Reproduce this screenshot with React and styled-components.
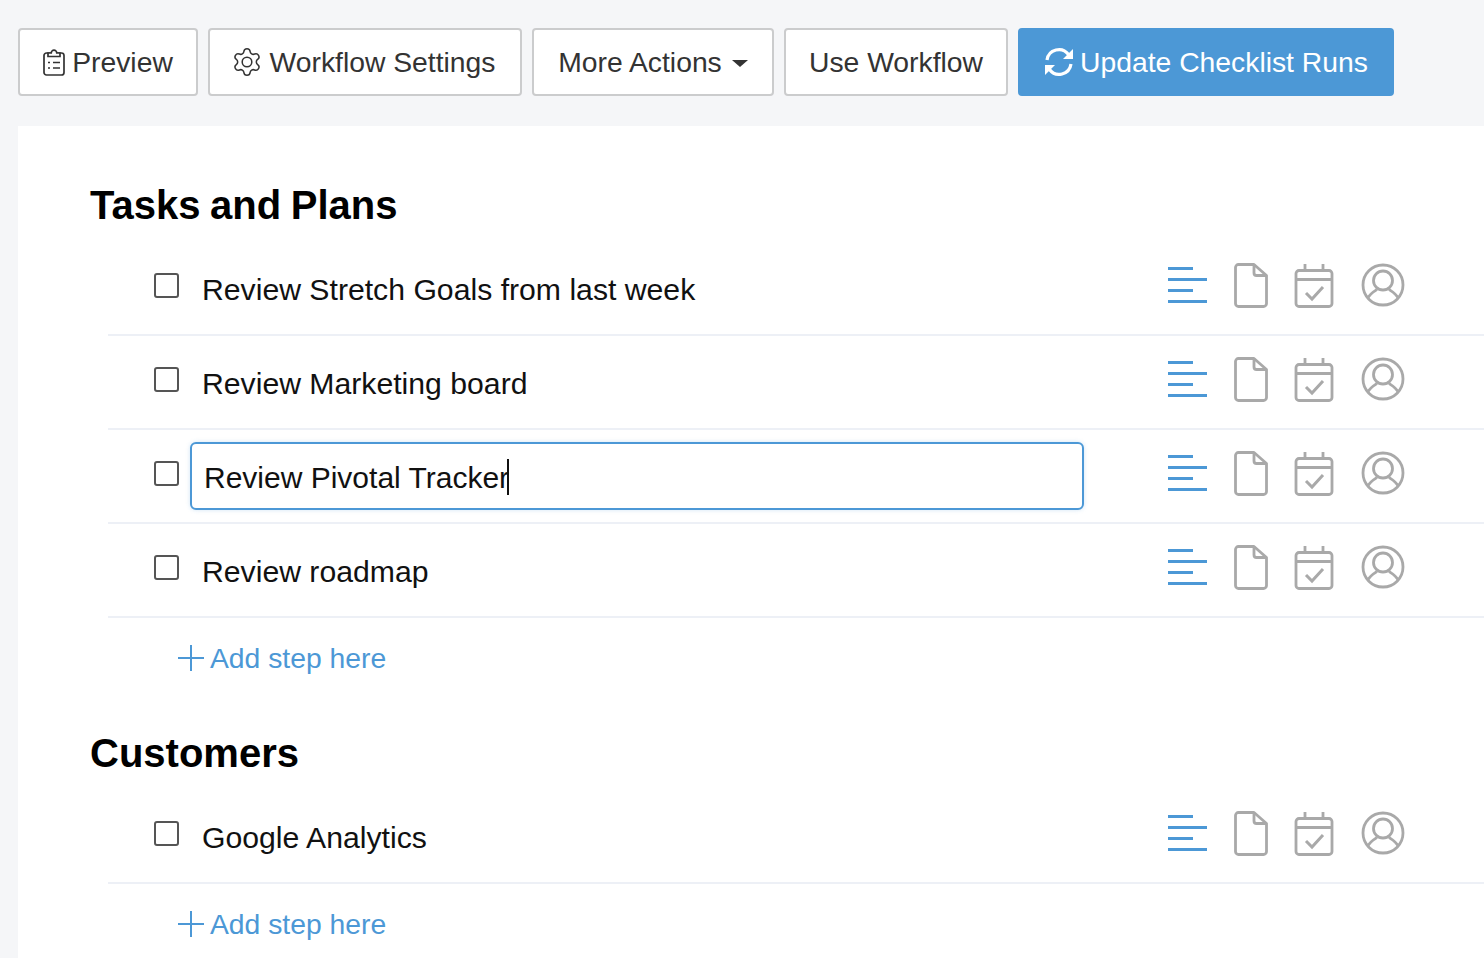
import React from "react";
import styled, { createGlobalStyle } from "styled-components";

const Global = createGlobalStyle`
  html, body { margin: 0; padding: 0; background: #f5f6f8; overflow: hidden; }
  body { font-family: "Liberation Sans", Arial, sans-serif; }
`;
const Page = styled.div`
  width: 1484px; height: 958px; overflow: hidden; background: #f5f6f8;
`;
const Toolbar = styled.div`
  display: flex; gap: 10px; padding: 28px 0 30px 18px; height: 68px;
`;
const Button = styled.button`
  display: flex; align-items: center; justify-content: center; gap: ${p => p.$gap || 0}px;
  width: ${p => p.$w}px; height: 68px; box-sizing: border-box; padding: 0 ${p => p.$pr || 0}px 0 0;
  background: ${p => (p.$primary ? "#4c98d6" : "#fff")};
  color: ${p => (p.$primary ? "#fff" : "#333")};
  border: 2px solid ${p => (p.$primary ? "#4c98d6" : "#cbcccd")};
  border-radius: 4px; font: 400 28.3px "Liberation Sans", Arial, sans-serif;
`;
const Caret = styled.span`
  width: 0; height: 0; margin-left: 10px; margin-top: 3px;
  border-left: 8px solid transparent; border-right: 8px solid transparent; border-top: 7px solid #333;
`;
const Panel = styled.main`
  margin-left: 18px; background: #fff; height: 832px; padding-left: 72px; padding-top: 54px; box-sizing: border-box;
`;
const Section = styled.section`
  margin-bottom: ${p => p.$mb || 0}px;
`;
const Heading = styled.h2`
  margin: 0; font: 700 40px/50px "Liberation Sans", Arial, sans-serif; color: #000; height: 62px; word-spacing: -1.500px;
`;
const Row = styled.div`
  display: flex; align-items: flex-start; height: 94px; box-sizing: border-box;
  margin-left: 18px; border-bottom: 2px solid #edf0f6; position: relative;
`;
const Check = styled.span`
  width: 25px; height: 25px; box-sizing: border-box; flex: none; margin: 31px 0 0 46px;
  border: 2px solid #555; border-radius: 3px; background: #fff;
`;
const Label = styled.div`
  width: 894px; flex: none; margin: 29px 0 0 23px; font-size: 30.200px; line-height: 38px; color: #111; white-space: nowrap;
`;
const Editor = styled.div`
  width: 894px; height: 68px; flex: none; box-sizing: border-box; margin: 12px 0 0 11px; padding: 15px 0 0 12px;
  border: 2px solid #4c98d6; border-radius: 6px; font-size: 30px; line-height: 38px; color: #111; white-space: nowrap;
  box-shadow: 0 0 4px rgba(76,152,214,.25); background: #fff;
  display: flex;
`;
const Caretbar = styled.span`
  width: 2px; height: 36px; background: #111; margin: 0 0 0 -2px;
`;
const Icons = styled.div`
  position: absolute; left: 1059px; top: 22px; display: flex; align-items: flex-start;
`;
const Add = styled.div`
  display: flex; align-items: center; gap: 6px; height: 82px; margin-left: 88px; padding-bottom: 2px; box-sizing: border-box;
  color: #4c98d6; font-size: 28.300px;
`;

const LinesIcon = () => (
  <svg width="40" height="40" viewBox="0 0 40 40" fill="none" stroke="#4c98d6" strokeWidth="3">
    <path d="M1 4.500H26M1 15.500H40M1 26.500H26M1 37.500H40" />
  </svg>
);
const DocIcon = () => (
  <svg width="34" height="46" viewBox="0 0 34 46" fill="none" stroke="#a9a9a9" strokeWidth="2.800" strokeLinejoin="round" style={{ marginLeft: 27, marginTop: -1 }}>
    <path d="M4.500 1.500H20L32.500 12.500V40.500a3 3 0 0 1-3 3H4.500a3 3 0 0 1-3-3V4.500a3 3 0 0 1 3-3Z" />
    <path d="M20 1.500V10a2.500 2.500 0 0 0 2.500 2.500H32.500" />
  </svg>
);
const CalIcon = () => (
  <svg width="40" height="46" viewBox="0 0 40 46" fill="none" stroke="#a9a9a9" strokeWidth="2.800" style={{ marginLeft: 26, marginTop: -1 }}>
    <rect x="2" y="7.500" width="36" height="36" rx="3" />
    <path d="M2 16.500H38M11 1V7.500M29 1V7.500" />
    <path d="M12 30L18 36L29 24" strokeWidth="3" />
  </svg>
);
const UserIcon = () => (
  <svg width="44" height="44" viewBox="0 0 44 44" fill="none" stroke="#a9a9a9" strokeWidth="2.800" style={{ marginLeft: 27, marginTop: -1 }}>
    <circle cx="22" cy="22" r="20" />
    <circle cx="22" cy="17.500" r="9.500" />
    <path d="M6.500 35.500C9 30.500 13 28.500 16 26.500M37.500 35.500C35 30.500 31 28.500 28 26.500" />
  </svg>
);
const ClipboardIcon = () => (
  <svg width="22" height="28" viewBox="0 0 22 28" fill="none" stroke="#333" strokeWidth="1.700" style={{ marginTop: 0 }}>
    <rect x="1" y="5" width="20" height="22" rx="2.500" />
    <path d="M5 5V8.500H17V5H13.800a2.800 2.800 0 0 0-5.600 0Z" fill="#fff" />
    <path d="M5 14.500h2M10 14.500h7M5 20h2M10 20h7" />
  </svg>
);
const GearIcon = () => (
  <svg width="32" height="32" viewBox="0 0 24 24" fill="none" stroke="#333" strokeWidth="1.150" strokeLinejoin="round">
    <path d="M9.671 4.136a2.340 2.340 0 0 1 4.659 0 2.340 2.340 0 0 0 3.319 1.915 2.340 2.340 0 0 1 2.330 4.033 2.340 2.340 0 0 0 0 3.831 2.340 2.340 0 0 1-2.330 4.033 2.340 2.340 0 0 0-3.319 1.915 2.340 2.340 0 0 1-4.659 0 2.340 2.340 0 0 0-3.320-1.915 2.340 2.340 0 0 1-2.330-4.033 2.340 2.340 0 0 0 0-3.831A2.340 2.340 0 0 1 6.350 6.051a2.340 2.340 0 0 0 3.319-1.915" />
    <circle cx="12" cy="12" r="3.600" />
  </svg>
);
const SyncIcon = () => (
  <svg width="30" height="30" viewBox="0 0 30 30" fill="none" stroke="#fff" strokeWidth="3.200">
    <path d="M3 13A12 12 0 0 1 24.500 7.500" />
    <path d="M27 17A12 12 0 0 1 5.500 22.500" />
    <path d="M29 2V12H19Z" fill="#fff" stroke="none" />
    <path d="M1 28V18H11Z" fill="#fff" stroke="none" />
  </svg>
);
const PlusIcon = () => (
  <svg width="26" height="26" viewBox="0 0 26 26" stroke="#4c98d6" strokeWidth="2">
    <path d="M13 0V26M0 13H26" />
  </svg>
);

const RowIcons = () => (
  <Icons>
    <LinesIcon />
    <DocIcon />
    <CalIcon />
    <UserIcon />
  </Icons>
);
const Item = ({ text, editing }) => (
  <Row>
    <Check />
    {editing ? (
      <Editor>{text}<Caretbar /></Editor>
    ) : (
      <Label>{text}</Label>
    )}
    <RowIcons />
  </Row>
);
const AddStep = () => (
  <Add><PlusIcon />Add step here</Add>
);

export default function App() {
  return (
    <Page>
      <Global />
      <Toolbar>
        <Button $w={180} $gap={7}><ClipboardIcon />Preview</Button>
        <Button $w={314} $gap={7} $pr={4}><GearIcon />Workflow Settings</Button>
        <Button $w={242}>More Actions<Caret /></Button>
        <Button $w={224}>Use Workflow</Button>
        <Button $w={376} $primary $gap={6}><SyncIcon />Update Checklist Runs</Button>
      </Toolbar>
      <Panel>
        <Section $mb={28}>
          <Heading>Tasks and Plans</Heading>
          <Item text="Review Stretch Goals from last week" />
          <Item text="Review Marketing board" />
          <Item text="Review Pivotal Tracker" editing />
          <Item text="Review roadmap" />
          <AddStep />
        </Section>
        <Section>
          <Heading>Customers</Heading>
          <Item text="Google Analytics" />
          <AddStep />
        </Section>
      </Panel>
    </Page>
  );
}
